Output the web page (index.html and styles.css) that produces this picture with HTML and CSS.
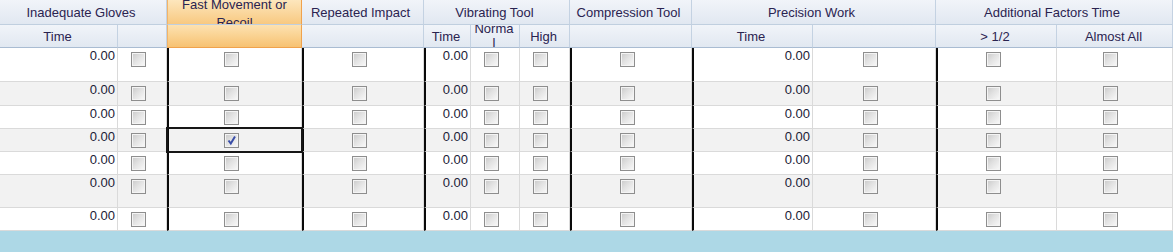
FILE: index.html
```html
<!DOCTYPE html>
<html>
<head>
<meta charset="utf-8">
<link rel="stylesheet" href="styles.css">
</head>
<body>
<div class="grid">
  <div class="row hdr h1">
    <div class="hc s2">Inadequate Gloves</div>
    <div class="hc hot wrap">Fast Movement or Recoil</div>
    <div class="hc">Repeated Impact</div>
    <div class="hc s3">Vibrating Tool</div>
    <div class="hc">Compression Tool</div>
    <div class="hc s2">Precision Work</div>
    <div class="hc s2">Additional Factors Time</div>
  </div>
  <div class="row hdr h2">
    <div class="hc">Time</div>
    <div class="hc"></div>
    <div class="hc hot"></div>
    <div class="hc"></div>
    <div class="hc">Time</div>
    <div class="hc tall"><span class="brk">Normal</span></div>
    <div class="hc">High</div>
    <div class="hc"></div>
    <div class="hc">Time</div>
    <div class="hc"></div>
    <div class="hc">&gt; 1/2</div>
    <div class="hc">Almost All</div>
  </div>
</div>
<div class="grid body" id="body"></div>
<div class="footer"></div>
<script>
  var heights = [34, 24, 23, 23, 23, 33, 23];
  var body = document.getElementById('body');
  var cols = ['num', 'cb', 'cb tk', 'cb tk', 'num tk', 'cb', 'cb', 'cb tk', 'num tk', 'cb', 'cb tk', 'cb'];
  heights.forEach(function (h, r) {
    var row = document.createElement('div');
    row.className = 'row data' + (r % 2 ? ' alt' : '');
    row.style.height = h + 'px';
    cols.forEach(function (c, i) {
      var cell = document.createElement('div');
      cell.className = 'dc ' + c;
      if (c.indexOf('num') === 0) {
        cell.textContent = '0.00';
      } else {
        var box = document.createElement('span');
        box.className = 'box';
        if (r === 3 && i === 2) {
          box.innerHTML = '<svg width="13" height="13" viewBox="0 0 13 13"><path d="M3.5 6.5 L5.8 9.5 L10 2.5" fill="none" stroke="#3a4ea8" stroke-width="2"/></svg>';
          cell.className += ' sel';
        }
        cell.appendChild(box);
      }
      row.appendChild(cell);
    });
    body.appendChild(row);
  });
</script>
</body>
</html>
```

FILE: styles.css
```css
html, body {
  margin: 0;
  padding: 0;
  background: #ffffff;
}

body {
  width: 1173px;
  height: 252px;
  overflow: hidden;
  font-family: "Liberation Sans", Arial, sans-serif;
  font-size: 13px;
  line-height: 15px;
  display: flex;
  flex-direction: column;
}

.row {
  display: grid;
  grid-template-columns: 118px 49px 135px 122px 47px 49px 50px 122px 121px 123px 121px 116px;
}

.hc {
  box-sizing: border-box;
  display: flex;
  align-items: center;
  justify-content: center;
  text-align: center;
  overflow: hidden;
  color: #2a2350;
  border-right: 1px solid #c4d2e2;
  background: linear-gradient(#f1f4f9, #e1e8f1);
}

.h1 .hc {
  height: 25px;
  border-bottom: 1px solid #c0cfdf;
  padding-right: 4px;
}

.h2 .hc {
  height: 23px;
  border-bottom: 1px solid #a9bcd2;
  padding-right: 2px;
}

.hc.s2 { grid-column: span 2; }
.hc.s3 { grid-column: span 3; }

.hc.hot {
  background: linear-gradient(#fde6bd, #f8c981);
  border-right: 1px solid #f0a24c;
  border-left: 1px solid #f3b468;
}

.h2 .hc.hot {
  background: linear-gradient(#fde2b1, #f7c272);
  border-bottom: 1px solid #f0a24c;
}

.h1 .hc.wrap {
  padding: 3px 10px 0;
  line-height: 18px;
}

.h2 .hc.tall {
  align-items: flex-start;
}

.brk {
  display: block;
  width: 40px;
  margin-top: -3px;
  word-break: break-all;
  line-height: 14px;
  text-align: center;
}

.body {
  flex: none;
}

.data {
  background: #ffffff;
}

.data.alt {
  background: #f2f2f2;
}

.dc {
  box-sizing: border-box;
  border-right: 1px solid #dadada;
  border-bottom: 1px solid #dadada;
  overflow: visible;
}

.dc.num {
  text-align: right;
  padding-right: 2px;
  color: #1b2136;
}

.dc.cb {
  display: flex;
  justify-content: center;
  align-items: flex-start;
  padding-top: 4px;
  padding-right: 8px;
}

.dc.tk {
  border-left: 2px solid #0a0a0a;
}

.box {
  box-sizing: border-box;
  width: 15px;
  height: 15px;
  border: 1px solid #8e8e8e;
  background: linear-gradient(135deg, #c9c9c9 0%, #e2e2e2 45%, #fafafa 100%);
  box-shadow: inset 0 0 0 1px #f4f4f4;
  display: flex;
  align-items: center;
  justify-content: center;
}

.dc.sel {
  position: relative;
}

.dc.sel::after {
  content: "";
  position: absolute;
  top: -2px;
  bottom: -2px;
  left: -3px;
  right: -2px;
  border: 2px solid #161616;
  pointer-events: none;
}

.footer {
  flex: 1;
  background: #add8e6;
}
```
